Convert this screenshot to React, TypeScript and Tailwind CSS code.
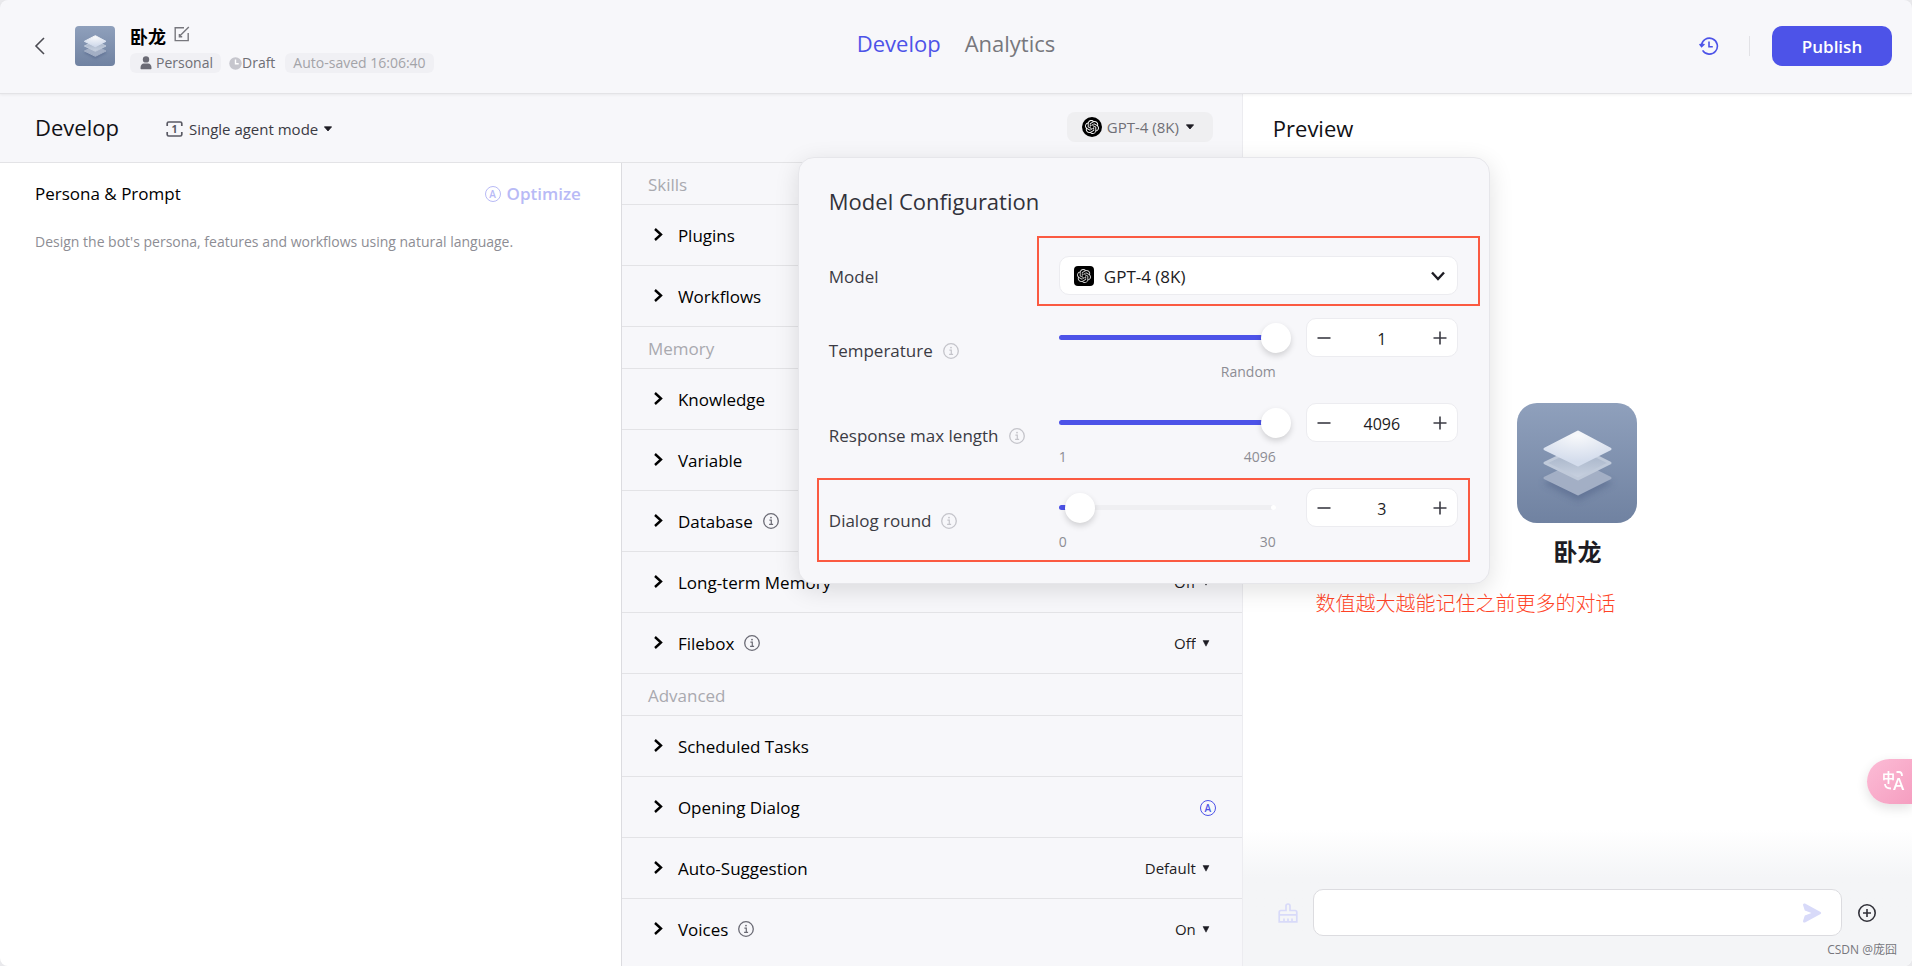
import { useState } from "react";
import type { ReactNode } from "react";
import { SiOpenai } from "react-icons/si";

type Row = {
  label: string;
  info?: boolean;
  option?: string;
  auto?: boolean;
};

const sections: { title: string; rows: Row[] }[] = [
  { title: "Skills", rows: [{ label: "Plugins" }, { label: "Workflows" }] },
  {
    title: "Memory",
    rows: [
      { label: "Knowledge" },
      { label: "Variable" },
      { label: "Database", info: true },
      { label: "Long-term Memory", option: "Off" },
      { label: "Filebox", info: true, option: "Off" },
    ],
  },
  {
    title: "Advanced",
    rows: [
      { label: "Scheduled Tasks" },
      { label: "Opening Dialog", auto: true },
      { label: "Auto-Suggestion", option: "Default" },
      { label: "Voices", info: true, option: "On" },
    ],
  },
];

function InfoIcon({ className }: { className: string }) {
  return (
    <svg className={`size-4 shrink-0 ${className}`} viewBox="0 0 16 16" fill="none" stroke="currentColor">
      <circle cx="8" cy="8" r="7.3" strokeWidth="1.3" />
      <path d="M6.4 7.1h1.9v4M6.1 11.4h4" strokeWidth="1.2" />
      <circle cx="8" cy="4.6" r="0.9" fill="currentColor" stroke="none" />
    </svg>
  );
}

function Caret() {
  return (
    <svg className="w-2 h-2 shrink-0 pointer-events-none" viewBox="0 0 8 8">
      <path d="M1 1.6h6L4 7.2z" fill="#1d1c23" stroke="#1d1c23" strokeWidth="0.5" />
    </svg>
  );
}

function WideCaret() {
  return (
    <svg className="w-2 h-2 shrink-0 pointer-events-none" viewBox="0 0 8 8">
      <path d="M0.4 1.8h7.2L4 6z" fill="#1d1c23" stroke="#1d1c23" strokeWidth="0.8" strokeLinejoin="round" />
    </svg>
  );
}

function Layers({ id, className }: { id: string; className: string }) {
  return (
    <svg className={className} viewBox="0 0 120 120">
      <defs>
        <linearGradient id={`${id}-bg`} x1="0" y1="0" x2="0" y2="1">
          <stop offset="0" stopColor="#8fa0bc" />
          <stop offset="1" stopColor="#7082a1" />
        </linearGradient>
        <radialGradient id={`${id}-top`} cx="0.5" cy="0.1" r="0.8">
          <stop offset="0" stopColor="#f8f9fb" />
          <stop offset="1" stopColor="#d3dcec" />
        </radialGradient>
        <linearGradient id={`${id}-mid`} x1="0" y1="0" x2="0" y2="1">
          <stop offset="0.4" stopColor="#b0bccf" />
          <stop offset="1" stopColor="#c9d2e1" />
        </linearGradient>
        <filter id={`${id}-blur`} x="-20%" y="-20%" width="140%" height="150%">
          <feGaussianBlur stdDeviation="3" />
        </filter>
      </defs>
      <rect width="120" height="120" fill={`url(#${id}-bg)`} />
      <path d="M61 63 96 80 61 98 26 80z" fill="#56688c" opacity="0.6" filter={`url(#${id}-blur)`} />
      <g strokeLinejoin="round" strokeWidth="3">
        <path d="M61 59 93 75 61 91 28 75z" fill="#a3afc5" stroke="#a3afc5" />
        <path d="M61 44 93 60 61 76 28 60z" fill={`url(#${id}-mid)`} stroke="#c0cada" />
        <path d="M61 29 93 46 61 62 28 46z" fill={`url(#${id}-top)`} stroke={`url(#${id}-top)`} />
      </g>
    </svg>
  );
}

function AutoMark() {
  return (
    <span className="flex size-4 shrink-0 items-center justify-center rounded-full border border-current text-[10px] leading-none font-semibold">
      A
    </span>
  );
}

function Header() {
  return (
    <header className="z-10 grid grid-cols-[1fr_auto_1fr] items-center h-[94px] rounded-t-lg bg-[#f7f7fa] border-b border-[#e3e3e6] px-5 pb-px shadow-[0_1px_3px_rgba(0,0,0,0.06)]">
      <div className="flex items-center pl-3">
        <button type="button" aria-label="Back" className="w-4 text-[#4b4b52]">
          <svg className="w-4 h-5" viewBox="0 0 16 20" fill="none" stroke="currentColor" strokeWidth="1.6">
            <path d="M12 2 4 10l8 8" />
          </svg>
        </button>
        <Layers id="small" className="ml-[27px] size-10 rounded-sm" />
        <div className="ml-[15px] flex flex-col gap-1 pt-1.5">
          <div className="flex items-center gap-2">
            <h1 className="text-lg leading-6 font-bold text-black">卧龙</h1>
            <button type="button" aria-label="Edit name" className="pb-1.5 text-[#77777d]">
              <svg className="size-4" viewBox="0 0 16 16" fill="none" stroke="currentColor" strokeWidth="1.4">
                <path d="M10 1.8H1.2v12.8h13V7M6 9.8l8.8-8.9M5.4 8v2.7h2.8" />
              </svg>
            </button>
          </div>
          <div className="flex items-center text-sm leading-5 text-[#6f6f76]">
            <span className="flex items-center gap-0.5 rounded-md bg-[#f0f0f4] px-2">
              <svg className="w-4 h-3.5" viewBox="0 0 16 14" fill="#6b6b75">
                <circle cx="8" cy="3.4" r="3.2" />
                <path d="M2.5 12.2c0-3.2 1.4-4.7 3.4-4.7h4.2c2 0 3.4 1.5 3.4 4.7 0 .7-.5 1-1 1h-9c-.6 0-1-.3-1-1z" />
              </svg>
              Personal
            </span>
            <span className="ml-2 flex items-center">
              <svg className="size-[13px]" viewBox="0 0 13 13">
                <circle cx="6.5" cy="6.5" r="6.2" fill="#c6c6cd" />
                <path d="M6.5 2.5v4.3h3.2" fill="none" stroke="#fff" strokeWidth="1.4" />
              </svg>
              Draft
            </span>
            <span className="ml-2.5 rounded-md bg-[#f0f0f4] px-2 text-[#a3a3a8]">Auto-saved 16:06:40</span>
          </div>
        </div>
      </div>

      <nav className="flex gap-6 pb-1.5 text-[22px] leading-8">
        <a href="#develop" className="font-medium text-[#4d53e8]">Develop</a>
        <a href="#analytics" className="text-[#77777d]">Analytics</a>
      </nav>

      <div className="flex items-center justify-end">
        <button type="button" aria-label="History" className="text-[#4d53e8]">
          <svg className="size-5" viewBox="0 0 20 20" fill="none" stroke="currentColor" strokeWidth="1.6">
            <path d="M2.4 9.6a8 8 0 1 1 1.2 4.8M0.6 8l2 2.6L5.4 8M10 5.6v5.2h3.8" />
          </svg>
        </button>
        <span className="mr-[22px] ml-[30px] h-5 w-px bg-[#e2e2e6]" />
        <button type="button" className="h-10 w-[120px] rounded-[10px] bg-[#4d53e8] pt-0.5 text-[17px] font-semibold text-white">
          Publish
        </button>
      </div>
    </header>
  );
}

type SettingProps = {
  label: string;
  min: number;
  max: number;
  initial: number;
  minText?: string;
  maxText: string;
  children?: ReactNode;
};

function Setting({ label, min, max, initial, minText, maxText, children }: SettingProps) {
  const [value, setValue] = useState(initial);
  const percent = ((value - min) / (max - min)) * 100;
  const id = label.toLowerCase().replaceAll(" ", "-");

  function update(next: number) {
    if (!Number.isNaN(next)) {
      setValue(Math.min(max, Math.max(min, next)));
    }
  }

  return (
    <div className="relative flex h-[85px] items-start">
      <div className="flex h-[66px] flex-1 items-center gap-2.5">
        <label htmlFor={id} className="text-[17px] leading-6 font-medium text-[#3b3b44]">{label}</label>
        <InfoIcon className="text-[#c4c4ca]" />
      </div>
      <div className="w-[217px]">
        <div className="relative flex h-[39px] items-center">
          <div className="absolute inset-x-0 h-[5px] overflow-hidden rounded-full bg-[#efeff2]">
            <div className="h-full bg-[#4d53e8]" style={{ width: `${percent}%` }} />
          </div>
          <span className="absolute right-0 size-[5px] rounded-full bg-white" />
          <input
            id={id}
            type="range"
            min={min}
            max={max}
            value={value}
            onChange={(e) => update(Number(e.target.value))}
            className="relative -mx-[15px] h-[30px] w-[247px] shrink-0 appearance-none bg-transparent [&::-webkit-slider-thumb]:size-[30px] [&::-webkit-slider-thumb]:appearance-none [&::-webkit-slider-thumb]:rounded-full [&::-webkit-slider-thumb]:bg-white [&::-webkit-slider-thumb]:shadow-[0_3px_6px_rgba(0,0,0,0.16)]"
          />
        </div>
        <div className="mt-[3px] flex justify-between text-sm leading-6 text-[#8d8d94]">
          <span>{minText}</span>
          <span>{maxText}</span>
        </div>
      </div>
      <div className="ml-[30px] flex h-[39px] w-[152px] items-center rounded-[10px] border border-[#ececf0] bg-white px-2.5">
        <button type="button" aria-label={`Decrease ${label}`} onClick={() => update(value - 1)}>
          <svg className="size-3.5" viewBox="0 0 14 14" stroke="#3b3b44" strokeWidth="1.6">
            <path d="M0.5 7h13" />
          </svg>
        </button>
        <input
          type="text"
          aria-label={`${label} value`}
          value={value}
          onChange={(e) => update(Number(e.target.value))}
          className="min-w-0 flex-1 bg-transparent pt-0.5 text-center text-base text-[#1d1c23]"
        />
        <button type="button" aria-label={`Increase ${label}`} onClick={() => update(value + 1)}>
          <svg className="size-3.5" viewBox="0 0 14 14" stroke="#3b3b44" strokeWidth="1.6">
            <path d="M0.5 7h13M7 0.5v13" />
          </svg>
        </button>
      </div>
      {children}
    </div>
  );
}

function ModelConfiguration() {
  return (
    <section
      aria-label="Model Configuration"
      className="absolute top-full -right-[277px] z-20 mt-[15px] h-[427px] w-[692px] rounded-2xl border border-[#e6e6ea] bg-[#f7f7fa] pt-[27px] pr-[31px] pl-[30px] shadow-[0_6px_24px_rgba(0,0,0,0.12)]"
    >
      <h2 className="text-[22px] leading-8 font-medium text-[#32323a]">Model Configuration</h2>
      <div className="relative mt-[39px] mb-[23px] flex h-[39px] items-center">
        <label htmlFor="model" className="flex-1 pt-0.5 text-[17px] leading-6 font-medium text-[#3b3b44]">Model</label>
        <div className="relative flex w-[399px] items-center">
          <span className="pointer-events-none absolute left-[15px] flex size-5 items-center justify-center rounded bg-black text-[#d6d6d6]">
            <SiOpenai className="size-3.5" />
          </span>
          <select
            id="model"
            className="h-[39px] w-full appearance-none rounded-[10px] border border-[#ececf0] bg-white pt-0.5 pl-11 text-[17px] text-[#1d1c23]"
          >
            <option>GPT-4 (8K)</option>
          </select>
          <svg
            className="pointer-events-none absolute right-3 size-4"
            viewBox="0 0 16 16"
            fill="none"
            stroke="#1d1c23"
            strokeWidth="2.4"
          >
            <path d="M2 4.5 8 11l6-6.5" />
          </svg>
          <div className="pointer-events-none absolute -inset-x-[22px] -top-5 -bottom-[11px] border-2 border-[#fb5a41]" />
        </div>
      </div>
      <Setting label="Temperature" min={0} max={1} initial={1} maxText="Random" />
      <Setting label="Response max length" min={1} max={4096} initial={4096} minText="1" maxText="4096" />
      <Setting label="Dialog round" min={0} max={30} initial={3} minText="0" maxText="30">
        <div className="pointer-events-none absolute -inset-x-3 -top-2.5 h-[84px] border-2 border-[#fb5a41]" />
      </Setting>
    </section>
  );
}

function SkillRow({ label, info, option, auto }: Row) {
  return (
    <li className="flex h-[61px] items-center border-b border-[#e3e3e6] pr-[26px] pl-8 last:h-[60px] last:border-b-0">
      <button type="button" className="flex items-center text-[17px] leading-6 font-medium text-black">
        <svg className="mr-2 -ml-1 h-4 w-5" viewBox="0 0 20 16" fill="none" stroke="currentColor" strokeWidth="2.4">
          <path d="m5 2 6 5.5L5 13" />
        </svg>
        <span className="pt-0.5">{label}</span>
      </button>
      {info && <InfoIcon className="ml-2.5 text-[#6b6b75]" />}
      {option && (
        <span className="ml-auto flex items-center gap-1.5 pr-1.5 text-[#1d1c23]">
          <select aria-label={label} className="appearance-none bg-transparent text-[15px] leading-5 field-sizing-content">
            <option>{option}</option>
          </select>
          <Caret />
        </span>
      )}
      {auto && (
        <button type="button" aria-label="Generate opening dialog" className="ml-auto pt-0.5 text-[#4d53e8]">
          <AutoMark />
        </button>
      )}
    </li>
  );
}

function Workspace() {
  return (
    <div className="flex flex-col border-r border-[#ececf0]">
      <div className="flex h-[69px] items-center border-b border-[#e3e3e6] bg-[#f7f7fa] pr-[29px] pb-0.5 pl-[35px]">
        <h2 className="text-[22px] leading-8 font-medium text-[#111116]">Develop</h2>
        <div className="ml-[47px] flex items-center pt-1 text-[#3b3b44]">
          <svg className="mr-1.5 h-4 w-[17px]" viewBox="0 0 17 16" fill="none" stroke="#5a5a64" strokeWidth="1.7">
            <path d="M1.2 5V2.5Q1.2 1 2.7 1h11.6q1.5 0 1.5 1.5V5M1.2 11v2.5q0 1.500 1.500 1.500h11.600q1.500 0 1.500-1.500V11" />
            <text x="8.5" y="11.8" textAnchor="middle" fontSize="10.5" fontWeight="700" fill="#5a5a64" stroke="none">1</text>
          </svg>
          <select aria-label="Agent mode" className="mr-1.5 appearance-none bg-transparent text-[15px] leading-5 font-medium field-sizing-content">
            <option>Single agent mode</option>
          </select>
          <WideCaret />
        </div>
        <div className="relative ml-auto">
          <button
            type="button"
            aria-expanded="true"
            className="flex h-[30px] w-[146px] items-center rounded-lg bg-[#efeff1] pl-[15px] text-[15px] text-[#6f6f76]"
          >
            <span className="mr-[5px] flex size-5 items-center justify-center rounded-full bg-black text-white">
              <SiOpenai className="size-3.5" />
            </span>
            <span className="mr-[7px]">GPT-4 (8K)</span>
            <WideCaret />
          </button>
          <ModelConfiguration />
        </div>
      </div>

      <div className="grid flex-1 grid-cols-2">
        <section className="bg-white pt-[19px] pr-10 pl-[35px]">
          <div className="flex items-center justify-between">
            <h3 className="text-[17px] leading-6 font-medium text-black">
              <label htmlFor="prompt">Persona &amp; Prompt</label>
            </h3>
            <button type="button" className="flex items-center gap-1.5 text-[17px] leading-6 font-semibold text-[#b8baf6]">
              <AutoMark />
              Optimize
            </button>
          </div>
          <textarea
            id="prompt"
            placeholder="Design the bot's persona, features and workflows using natural language."
            className="mt-6 h-96 w-full resize-none bg-transparent text-sm leading-6 placeholder:text-[#8d8d94]"
          />
        </section>
        <section className="border-l border-[#dcdce0] bg-[#f7f7fa]">
          {sections.map((section) => (
            <div key={section.title} className="border-b border-[#e3e3e6] last:border-b-0">
              <h3 className="h-[42px] border-b border-[#e3e3e6] pt-2 pl-[26px] text-[17px] leading-7 text-[#a9a9af]">
                {section.title}
              </h3>
              <ul>
                {section.rows.map((row) => (
                  <SkillRow key={row.label} {...row} />
                ))}
              </ul>
            </div>
          ))}
        </section>
      </div>
    </div>
  );
}

function Preview() {
  return (
    <section className="flex flex-col bg-white">
      <h2 className="mt-[18px] pl-[30px] text-[22px] leading-8 font-medium text-[#111116]">Preview</h2>
      <div className="flex flex-1 flex-col items-center pt-[259px]">
        <Layers id="large" className="size-[120px] rounded-[20px]" />
        <p className="mt-[11px] text-2xl leading-9 font-bold text-[#1d1c23]">卧龙</p>
        <p className="mt-[18px] mr-[224px] text-xl leading-8 font-light text-[#ff4326]">数值越大越能记住之前更多的对话</p>
      </div>
      <form
        onSubmit={(e) => e.preventDefault()}
        className="flex items-center bg-linear-to-b from-white to-[#f4f5f7] to-45% pt-[59px] pr-[35px] pl-[35px]"
      >
        <button type="button" aria-label="Clear chat" className="mr-[15px] text-[#d8daf9]">
          <svg className="size-5" viewBox="0 0 20 20" fill="none" stroke="currentColor" strokeWidth="1.7">
            <path d="M8 7.5V3q0-2 2-2t2 2v4.5h5q1.8 0 1.8 1.8v9.5H1.2V9.3q0-1.8 1.8-1.8zM1.2 11.8h17.6M6 18.500v-3M10 18.500v-3M14 18.500v-3" />
          </svg>
        </button>
        <div className="relative flex flex-1 items-center">
          <input
            type="text"
            aria-label="Message"
            className="h-[47px] w-full rounded-[10px] border border-[#dcdce0] bg-white pr-14 pl-4 text-base"
          />
          <button type="submit" aria-label="Send" className="absolute right-5 text-[#d8daf9]">
            <svg className="size-5" viewBox="0 0 20 20" fill="currentColor">
              <path d="M3 .6 18.600 8.900q1.300 1.100 0 2.200L3 19.400Q.8 20 1 18l1.800-5.600L9.500 10 2.800 7.600 1 2Q.8 0 3 .6z" />
            </svg>
          </button>
        </div>
        <button type="button" aria-label="Attach" className="ml-[15px] text-[#32323a]">
          <svg className="size-5" viewBox="0 0 20 20" fill="none" stroke="currentColor" strokeWidth="1.6">
            <circle cx="10" cy="10" r="8.2" />
            <path d="M10 6v8M6 10h8" />
          </svg>
        </button>
      </form>
      <p className="bg-[#f4f5f7] pt-1 pr-[15px] pb-1.5 text-right text-xs leading-5 text-[#77777d]">CSDN @庞囧</p>
    </section>
  );
}

function TranslateBadge() {
  return (
    <button
      type="button"
      aria-label="Translate"
      className="fixed right-0 bottom-[162px] z-30 h-[45px] w-[45px] rounded-l-full bg-linear-to-br from-[#fcbcd6] to-[#f59ec0] text-white shadow-[0_4px_12px_rgba(0,0,0,0.12)]"
    >
      <span className="absolute top-2.5 left-[15px] text-[13px] leading-4 font-bold">中</span>
      <span className="absolute top-[17px] left-[26px] text-[17px] leading-4 font-semibold">A</span>
      <svg className="absolute top-[11px] left-4 size-5" viewBox="0 0 20 20" fill="none" stroke="currentColor" strokeWidth="1.8">
        <path d="M13.5 2H16q3 0 3 4M2 14q0 4.500 6 4.500" />
      </svg>
    </button>
  );
}

function App() {
  return (
    <div className="flex min-h-screen flex-col overflow-x-hidden bg-[#e9e9ec] font-['Open_Sans','Noto_Sans_CJK_SC',sans-serif]">
      <Header />
      <main className="grid flex-1 grid-cols-[13fr_7fr] overflow-hidden rounded-b-lg">
        <Workspace />
        <Preview />
      </main>
      <TranslateBadge />
    </div>
  );
}

export default App;
